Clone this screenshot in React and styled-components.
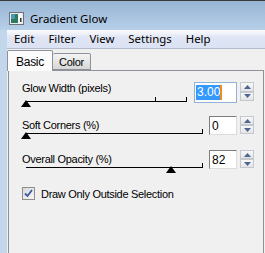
import React from 'react';
import styled, { createGlobalStyle } from 'styled-components';

const GlobalStyle = createGlobalStyle`
  html, body {
    margin: 0;
    padding: 0;
    background: #c2d6ec;
  }
  body {
    width: 265px;
    height: 253px;
    overflow: hidden;
  }
`;

const Window = styled.div`
  width: 265px;
  height: 253px;
  box-sizing: border-box;
  border-top: 1px solid #3a3a3a;
  background: #c2d6ec;
  display: flex;
  flex-direction: column;
  overflow: hidden;
`;

const TitleBar = styled.div`
  height: 29px;
  flex: none;
  box-sizing: border-box;
  display: flex;
  align-items: center;
  gap: 6px;
  padding: 5px 0 0 9px;
  background: linear-gradient(#97b5d3, #b7cfe8);
  font-family: "Noto Sans", "Open Sans", sans-serif;
  font-size: 11.5px;
  color: #000;
`;

const Client = styled.div`
  flex: 1;
  margin-left: 7px;
  background: #f0f0f0;
  display: flex;
  flex-direction: column;
  min-height: 0;
`;

const MenuBar = styled.div`
  height: 18px;
  flex: none;
  display: flex;
  border-bottom: 1px solid #b4bbcd;
  background: linear-gradient(#fafbfd 0%, #eef1f9 22%, #dfe5f4 40%, #dbe2f3 100%);
  font-family: "Noto Sans", "Open Sans", sans-serif;
  font-size: 11.4px;
  line-height: 18px;
  color: #000;
`;

const MenuItem = styled.span`
  padding: 0 7px;
`;

const dialogFont = `
  font-family: "Liberation Sans", Arial, sans-serif;
  font-size: 11px;
  letter-spacing: -0.3px;
  color: #000;
`;

const TabStrip = styled.div`
  height: 21px;
  flex: none;
  display: flex;
  align-items: flex-end;
  position: relative;
  z-index: 1;
  ${dialogFont}
`;

const Tab = styled.div`
  box-sizing: border-box;
  width: ${(p) => p.$width}px;
  height: ${(p) => (p.$active ? 21 : 17)}px;
  margin-bottom: ${(p) => (p.$active ? -1 : 0)}px;
  border: 1px solid #8e9199;
  border-bottom: ${(p) => (p.$active ? 'none' : '1px solid #8e9199')};
  border-left: ${(p) => (p.$active ? '1px solid #8e9199' : 'none')};
  border-radius: 2px 2px 0 0;
  background: ${(p) => (p.$active ? '#fbfbfb' : 'linear-gradient(#f4f4f4, #e2e2e2 60%, #d6d6d6)')};
  display: flex;
  justify-content: center;
  padding-top: ${(p) => (p.$active ? 4 : 2)}px;
  font-size: ${(p) => (p.$active ? 12 : 11)}px;
`;

const Panel = styled.div`
  flex: 1;
  margin: 0 1px 0 1px;
  border: 1px solid #8e9199;
  border-bottom: none;
  background: #f0f0f0;
  padding: 11px 9px 0 13px;
  display: flex;
  flex-direction: column;
  ${dialogFont}
`;

const Row = styled.div`
  height: 34px;
  display: flex;
  align-items: flex-start;
`;

const SliderCol = styled.div`
  flex: 1;
  display: flex;
  flex-direction: column;
  margin-right: ${(p) => p.$gap}px;
`;

const Label = styled.div`
  margin-top: ${(p) => p.$top}px;
  line-height: 12px;
  white-space: nowrap;
`;

const Track = styled.div`
  position: relative;
  height: 1px;
  margin: ${(p) => p.$top}px 0 0 4px;
  background: #000;
`;

const Tick = styled.div`
  position: absolute;
  bottom: 0;
  width: 1px;
  height: 5px;
  background: #000;
`;

const Thumb = styled.div`
  position: absolute;
  top: -1px;
  width: 0;
  height: 0;
  margin-left: -5.5px;
  border-left: 5.5px solid transparent;
  border-right: 5.5px solid transparent;
  border-bottom: 7px solid #000;
`;

const InputBox = styled.div`
  box-sizing: border-box;
  width: ${(p) => p.$width}px;
  height: ${(p) => (p.$focused ? 21 : 19)}px;
  border: 1px solid;
  border-color: ${(p) => (p.$focused ? '#8fb2d8' : '#7e7e7e #dcdcdc #dcdcdc #7e7e7e')};
  background: #fff;
  display: flex;
  align-items: center;
  padding-left: ${(p) => (p.$focused ? 1 : 2)}px;
  font-family: "Liberation Sans", Arial, sans-serif;
  font-size: 12px;
  letter-spacing: 0;
`;

const Selected = styled.span`
  background: #3399ff;
  color: #fff;
  line-height: 15px;
  padding: 0 0 0 1px;
`;

const Caret = styled.span`
  width: 2px;
  height: 15px;
  background: #f08a24;
`;

const Spinner = styled.div`
  width: 14px;
  height: ${(p) => (p.$tall ? 19 : 18)}px;
  margin-left: 3px;
  display: flex;
  flex-direction: column;
`;

const SpinButton = styled.div`
  flex: 1;
  box-sizing: border-box;
  border: 1px solid #c4c8cf;
  background: linear-gradient(#f8f8f8, #e4e4e4);
  display: flex;
  align-items: center;
  justify-content: center;
`;

const CheckRow = styled.label`
  display: flex;
  align-items: center;
  gap: 6px;
  margin-top: 3px;
`;

const CheckBox = styled.span`
  box-sizing: border-box;
  width: 13px;
  height: 13px;
  border: 1px solid #8f8f8f;
  background: linear-gradient(135deg, #d9d9d9, #f6f6f6);
  display: flex;
  align-items: center;
  justify-content: center;
`;

const AppIcon = () => (
  <svg width="15" height="13" viewBox="0 0 15 13">
    <rect x="0.5" y="0.5" width="14" height="12" fill="#e8ecef" stroke="#6d7378" />
    <rect x="2" y="2" width="7" height="9" fill="#2f7a5e" />
    <rect x="2" y="2" width="4" height="5" fill="#4a9bb0" />
    <rect x="9" y="2" width="4" height="9" fill="#f4f7f8" />
    <rect x="11" y="6" width="1.5" height="4" fill="#333" />
  </svg>
);

const Arrow = ({ up }) => (
  <svg width="7" height="4" viewBox="0 0 7 4">
    <path d={up ? 'M0 4 L3.5 0 L7 4 Z' : 'M0 0 L3.5 4 L7 0 Z'} fill="#4e6593" />
  </svg>
);

const Spin = ({ tall }) => (
  <Spinner $tall={tall}>
    <SpinButton>
      <Arrow up />
    </SpinButton>
    <SpinButton>
      <Arrow />
    </SpinButton>
  </Spinner>
);

const Slider = ({ value, ticks, top }) => (
  <Track $top={top}>
    {ticks.map((t) => (
      <Tick key={t} style={{ left: `calc(${t * 100}% - ${t === 1 ? 1 : 0}px)` }} />
    ))}
    <Thumb style={{ left: `${value * 100}%` }} />
  </Track>
);

const rows = [
  { label: 'Soft Corners (%)', value: '0', pos: 0, ticks: [1] },
  { label: 'Overall Opacity (%)', value: '82', pos: 0.82, ticks: [1] },
];

const App = () => (
  <>
    <GlobalStyle />
    <Window>
      <TitleBar>
        <AppIcon />
        <span>Gradient Glow</span>
      </TitleBar>
      <Client>
        <MenuBar>
          <MenuItem>Edit</MenuItem>
          <MenuItem>Filter</MenuItem>
          <MenuItem>View</MenuItem>
          <MenuItem>Settings</MenuItem>
          <MenuItem>Help</MenuItem>
        </MenuBar>
        <TabStrip>
          <Tab $active $width={46}>Basic</Tab>
          <Tab $width={38}>Color</Tab>
        </TabStrip>
        <Panel>
          <Row>
            <SliderCol $gap={7}>
              <Label $top={0}>Glow Width (pixels)</Label>
              <Slider value={0} ticks={[0.8, 1]} top={7} />
            </SliderCol>
            <InputBox $focused $width={43}>
              <Selected>3.00</Selected>
              <Caret />
            </InputBox>
            <Spin tall />
          </Row>
          {rows.map((r) => (
            <Row key={r.label}>
              <SliderCol $gap={6}>
                <Label $top={3}>{r.label}</Label>
                <Slider value={r.pos} ticks={r.ticks} top={2} />
              </SliderCol>
              <InputBox $width={28}>{r.value}</InputBox>
              <Spin />
            </Row>
          ))}
          <CheckRow>
            <CheckBox>
              <svg width="9" height="9" viewBox="0 0 9 9">
                <path d="M1 4.5 L3.5 7 L8 1" fill="none" stroke="#3c5aa0" strokeWidth="1.8" />
              </svg>
            </CheckBox>
            <span>Draw Only Outside Selection</span>
          </CheckRow>
        </Panel>
      </Client>
    </Window>
  </>
);

export default App;
